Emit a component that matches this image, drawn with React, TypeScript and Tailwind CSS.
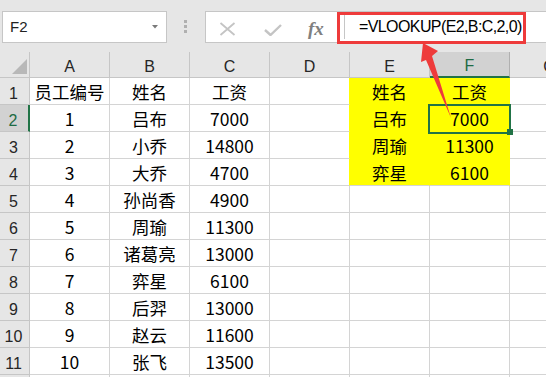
import React from "react";

const data: string[][] = [
  ["员工编号", "姓名", "工资", "", "姓名", "工资", ""],
  ["1", "吕布", "7000", "", "吕布", "7000", ""],
  ["2", "小乔", "14800", "", "周瑜", "11300", ""],
  ["3", "大乔", "4700", "", "弈星", "6100", ""],
  ["4", "孙尚香", "4900", "", "", "", ""],
  ["5", "周瑜", "11300", "", "", "", ""],
  ["6", "诸葛亮", "13000", "", "", "", ""],
  ["7", "弈星", "6100", "", "", "", ""],
  ["8", "后羿", "13000", "", "", "", ""],
  ["9", "赵云", "11600", "", "", "", ""],
  ["10", "张飞", "13500", "", "", "", ""],
  ["", "", "", "", "", "", ""],
];

const letters = ["A", "B", "C", "D", "E", "F", "G"];

function Cell({ r, c, text }: { r: number; c: number; text: string }) {
  const yellow = (c === 4 || c === 5) && r <= 3;
  const rightYellow = c >= 3 && c <= 5 && r <= 3;
  const bottomYellow = (c === 4 || c === 5) && r <= 2;
  const selected = r === 1 && c === 5;
  return (
    <div
      className={[
        "relative flex h-[27px] items-end justify-center border-b border-r pb-[4px]",
        yellow ? "bg-[#ffff00]" : "bg-white",
        rightYellow ? "border-r-[#ffff00]" : "border-r-[#d4d4d4]",
        bottomYellow ? "border-b-[#ffff00]" : "border-b-[#d4d4d4]",
      ].join(" ")}
    >
      <span className="font-['Noto_Sans_CJK_SC',sans-serif] text-[17.5px] leading-none text-black">{text}</span>
      {selected && (
        <>
          <div className="absolute left-[-2px] top-[-1px] z-10 h-[30px] w-[83px] border-2 border-[#217346]" />
          <div className="absolute left-[77px] top-[24px] z-10 h-[6px] w-[6px] bg-[#217346]" />
        </>
      )}
    </div>
  );
}

export default function App() {
  return (
    <div className="relative h-[377px] w-[546px] overflow-hidden bg-white">
      {/* Formula bar */}
      <div className="flex h-[52px] items-start bg-[#e6e6e6] pt-[11px]">
        <div className="ml-[2px] flex h-[32px] w-[165px] items-center justify-between border border-[#c6c6c6] bg-white pl-[7px] pr-[8px]">
          <span className="font-['Liberation_Sans',sans-serif] text-[15px] text-[#222]">F2</span>
          <svg width="6" height="4" viewBox="0 0 6 4">
            <polygon points="0,0 6,0 3,3.5" fill="#7a7a7a" />
          </svg>
        </div>
        <div className="ml-[17px] mt-[9px] flex flex-col gap-[2px]">
          <div className="h-[3px] w-[3px] bg-[#b0b0b0]" />
          <div className="h-[3px] w-[3px] bg-[#b0b0b0]" />
          <div className="h-[3px] w-[3px] bg-[#b0b0b0]" />
        </div>
        <div className="ml-[18px] flex h-[32px] flex-1 items-center border border-r-0 border-[#c6c6c6] bg-white">
          <svg className="ml-[13px] mt-[3px]" width="17" height="14" viewBox="0 0 17 14">
            <path d="M1.5 1 L15.5 13 M15.5 1 L1.5 13" stroke="#c4c4c4" strokeWidth="1.8" fill="none" />
          </svg>
          <svg className="ml-[28px] mt-[5px]" width="18" height="12" viewBox="0 0 18 12">
            <path d="M1 6 L6.5 11 L17 1" stroke="#c4c4c4" strokeWidth="2.4" fill="none" />
          </svg>
          <span className="ml-[26px] mt-[2px] w-[18px] font-['Liberation_Serif',serif] text-[19px] font-bold italic leading-none text-[#808080]">
            fx
          </span>
          <div className="ml-[18px] h-[24px] w-px bg-[#c6c6c6]" />
          <span className="ml-[14px] font-['Liberation_Sans',sans-serif] text-[16px] tracking-[-0.6px] text-black">
            =VLOOKUP(E2,B:C,2,0)
          </span>
        </div>
      </div>

      {/* Grid */}
      <div className="grid w-[590px] grid-cols-[30px_80px_80px_80px_80px_80px_80px_80px]">
        <div className="flex h-[26px] items-end justify-end border-b border-r border-[#c6c6c6] bg-[#e6e6e6] pb-[3px] pr-[2px]">
          <svg width="15" height="15" viewBox="0 0 15 15">
            <polygon points="15,0 15,15 0,15" fill="#b8b8b8" />
          </svg>
        </div>
        {letters.map((l) => (
          <div
            key={l}
            className={[
              "flex h-[26px] items-end justify-center border-r pb-[2px] font-['Liberation_Sans',sans-serif] text-[16px] leading-none",
              l === "F"
                ? "border-b-2 border-b-[#217346] border-r-[#b0b0b0] bg-[#d2d2d2] text-[#1e6b44]"
                : "border-b border-b-[#c6c6c6] border-r-[#c6c6c6] bg-[#e6e6e6] text-[#262626]",
            ].join(" ")}
          >
            {l}
          </div>
        ))}
        {data.map((row, r) => (
          <React.Fragment key={r}>
            <div
              className={[
                "flex h-[27px] items-end justify-center border-b border-b-[#c6c6c6] pb-[2px] pr-[2px] font-['Liberation_Sans',sans-serif] text-[16px] leading-none",
                r === 1
                  ? "border-r-2 border-r-[#217346] bg-[#d2d2d2] text-[#1e6b44]"
                  : "border-r border-r-[#c6c6c6] bg-[#e6e6e6] text-[#262626]",
              ].join(" ")}
            >
              {r < 11 ? r + 1 : ""}
            </div>
            {row.map((t, c) => (
              <Cell key={c} r={r} c={c} text={t} />
            ))}
          </React.Fragment>
        ))}
      </div>

      {/* Annotation: red box */}
      <div className="absolute left-[337px] top-[12px] z-20 h-[32px] w-[189px] border-[3px] border-[#ee3b3b]" />
      {/* Annotation: red arrow */}
      <svg className="pointer-events-none absolute left-0 top-0 z-20" width="546" height="377" viewBox="0 0 546 377">
        <polygon points="423,43 438,51 432,56 451,118 426,60 421,62" fill="#ee3b3b" />
      </svg>
    </div>
  );
}
